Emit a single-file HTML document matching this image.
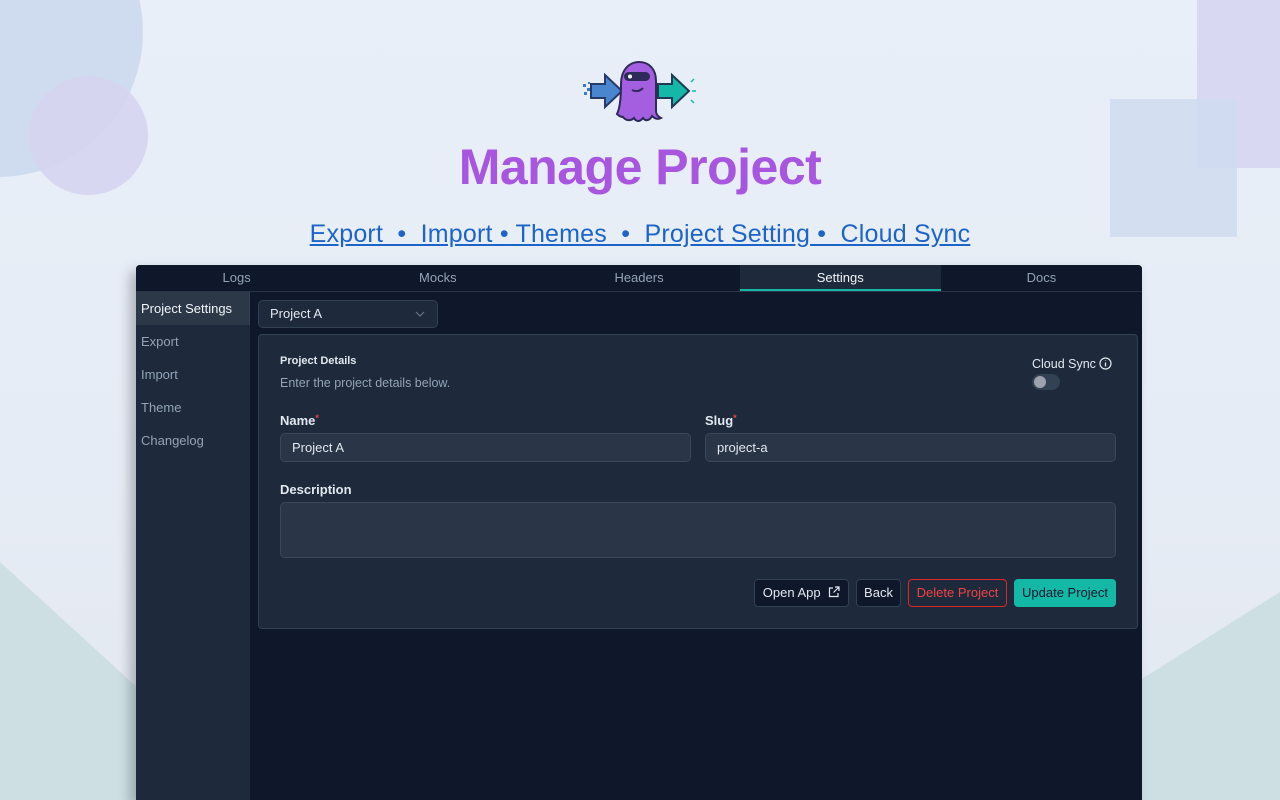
<!DOCTYPE html>
<html><head><meta charset="utf-8"><style>
*{box-sizing:border-box;margin:0;padding:0}
body{width:1280px;height:800px;overflow:hidden;position:relative;font-family:"Liberation Sans",sans-serif;background:linear-gradient(180deg,#e9eff8 0%,#e6ecf5 60%,#e3e8ef 100%)}
.abs{position:absolute}
.app{left:136px;top:265px;width:1006px;height:535px;background:#0f172a;border-radius:4px 4px 0 0;box-shadow:-6px 6px 12px rgba(0,0,0,.25);overflow:hidden}
.tabs{height:27px;display:flex;border-bottom:1px solid #2a3446;background:#0f172a}
.tab{flex:1;text-align:center;color:#94a3b8;font-size:13px;line-height:26px}
.tab.on{background:#1e293b;color:#f1f5f9;border-bottom:2px solid #14b8a6}
.side{left:0;top:27px;width:114px;bottom:0;background:#1e293b}
.si{height:33px;line-height:33px;padding-left:5px;color:#94a3b8;font-size:13px}
.si.on{background:#2c3748;color:#f1f5f9;border-right:1px solid #334155}
.sel{left:122px;top:35px;width:180px;height:28px;border:1px solid #334155;border-radius:5px;background:#1e293b;color:#e2e8f0;font-size:13px;line-height:26px;padding-left:11px}
.card{left:122px;top:69px;width:880px;height:295px;background:#1e293b;border:1px solid #334155;border-radius:4px}
.lbl{color:#e2e8f0;font-size:13px;font-weight:bold}
.inp{height:29px;border:1px solid #3b475a;border-radius:5px;background:#2a3547;color:#e2e8f0;font-size:13px;line-height:27px;padding-left:11px}
.btn{top:244px;height:28px;border-radius:4px;font-size:13px;line-height:26px;text-align:center;border:1px solid transparent}
.req{color:#ef4444;font-size:9px;vertical-align:top}
</style></head><body>
<div class="abs" style="left:-147px;top:-113px;width:290px;height:290px;border-radius:50%;background:#cfdcf0"></div>
<div class="abs" style="left:29px;top:76px;width:119px;height:119px;border-radius:50%;background:#d6d4f0;opacity:.9"></div>
<div class="abs" style="left:1197px;top:0;width:83px;height:168px;background:#d8d8f3"></div>
<div class="abs" style="left:1110px;top:99px;width:127px;height:138px;background:#cfdcf0;opacity:.85"></div>
<svg class="abs" style="left:0;top:0" width="1280" height="800"><polygon points="0,562 140,690 140,800 0,800" fill="#cddfe3"/><polygon points="1280,592 1140,680 1140,800 1280,800" fill="#cddfe3"/></svg>
<svg class="abs" style="left:580px;top:58px" width="120" height="64" viewBox="0 0 120 64">
<g fill="#3a7bc8"><rect x="3" y="26" width="3" height="3"/><rect x="7" y="30" width="3" height="3"/><rect x="4" y="34" width="3" height="3"/><rect x="8" y="24" width="2" height="2"/></g>
<path d="M11 26h14v-9l17 16-17 16v-9H11z" fill="#4a86cf" stroke="#283a6a" stroke-width="2"/>
<path d="M78 26h14v-9l17 16-17 16v-9H78z" fill="#14b8a6" stroke="#1f3a55" stroke-width="2"/>
<path d="M37 56c3-6 4-16 4-30 0-14 8-22 18-22s17 7 17 19v30c0 4 3 6 5 7-4 2-7 0-9-2-2 4-6 6-9 2-3 4-7 4-9 0-3 3-8 3-11-1-2 0-4-1-6-3z" fill="#a45ee0" stroke="#2e2a5a" stroke-width="2"/>
<rect x="44" y="14" width="26" height="9" rx="4.5" fill="#2e2a5a"/>
<circle cx="50" cy="18.5" r="2" fill="#fff"/>
<path d="M52 32q6 3 11-2" stroke="#2e2a5a" stroke-width="2" fill="none"/>
<g stroke="#14b8a6" stroke-width="1.5"><path d="M111 24l3-3M112 33h4M111 42l3 3"/></g>
</svg>
<div class="abs" style="left:0;width:1280px;top:138px;text-align:center;font-size:50px;font-weight:bold;color:#a855e0;letter-spacing:-.5px">Manage Project</div>
<div class="abs" style="left:0;width:1280px;top:220px;text-align:center;font-size:25px;color:#1d64c8;text-decoration:underline;letter-spacing:.2px">Export &nbsp;• &nbsp;Import • Themes &nbsp;• &nbsp;Project Setting • &nbsp;Cloud Sync</div>
<div class="abs app">
<div class="tabs"><div class="tab">Logs</div><div class="tab">Mocks</div><div class="tab">Headers</div><div class="tab on">Settings</div><div class="tab">Docs</div></div>
<div class="abs side"><div class="si on">Project Settings</div><div class="si">Export</div><div class="si">Import</div><div class="si">Theme</div><div class="si">Changelog</div></div>
<div class="abs sel">Project A<svg class="abs" style="left:156px;top:9px" width="10" height="8"><path d="M1 2l4 4 4-4" stroke="#64748b" fill="none" stroke-width="1.2"/></svg></div>
<div class="abs card">
<div class="abs lbl" style="left:21px;top:20px;font-size:11px">Project Details</div>
<div class="abs" style="left:21px;top:41px;font-size:12.5px;color:#94a3b8">Enter the project details below.</div>
<div class="abs" style="left:773px;top:22px;font-size:12.5px;color:#e2e8f0">Cloud Sync <svg width="13" height="13" style="vertical-align:-2px"><circle cx="6.5" cy="6.5" r="5.5" stroke="#e2e8f0" fill="none" stroke-width="1.2"/><path d="M6.5 5.5v4M6.5 3.5v.5" stroke="#e2e8f0" stroke-width="1.3"/></svg></div>
<div class="abs" style="left:773px;top:39px;width:28px;height:16px;border-radius:8px;background:#334155"><div style="margin:2px;width:12px;height:12px;border-radius:50%;background:#9ca3af"></div></div>
<div class="abs lbl" style="left:21px;top:78px">Name<span class="req">*</span></div>
<div class="abs lbl" style="left:446px;top:78px">Slug<span class="req">*</span></div>
<div class="abs inp" style="left:21px;top:98px;width:411px">Project A</div>
<div class="abs inp" style="left:446px;top:98px;width:411px">project-a</div>
<div class="abs lbl" style="left:21px;top:147px">Description</div>
<div class="abs inp" style="left:21px;top:167px;width:836px;height:56px"></div>
<div class="abs btn" style="left:495px;width:95px;border-color:#334155;background:#0f172a;color:#e2e8f0">Open App <svg width="12" height="12" style="vertical-align:-1px;margin-left:4px"><path d="M5 2H1.5v8.5H10V7M7 1h4v4M11 1L5.5 6.5" stroke="#e2e8f0" fill="none" stroke-width="1.2"/></svg></div>
<div class="abs btn" style="left:597px;width:45px;border-color:#334155;background:#0f172a;color:#e2e8f0">Back</div>
<div class="abs btn" style="left:649px;width:99px;border-color:#dc2626;background:#1e293b;color:#ef4444">Delete Project</div>
<div class="abs btn" style="left:755px;width:102px;background:#14b8a6;color:#0f172a">Update Project</div>
</div>
</div>
</body></html>
